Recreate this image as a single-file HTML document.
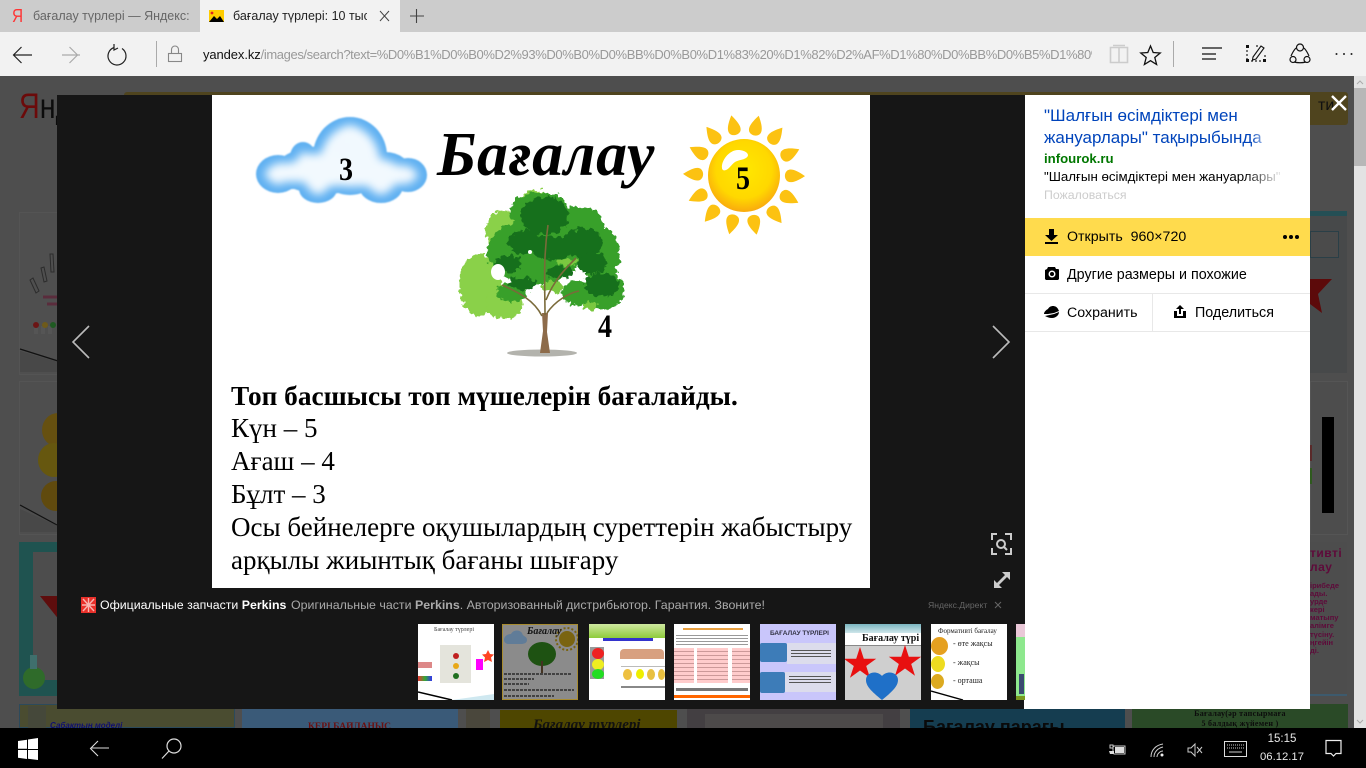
<!DOCTYPE html>
<html><head><meta charset="utf-8"><style>
html,body{margin:0;padding:0;width:1366px;height:768px;overflow:hidden;background:#4d4d4d;font-family:"Liberation Sans","Noto Sans CJK SC",sans-serif}
.a{position:absolute}
.t{position:absolute;white-space:nowrap}
svg{position:absolute;overflow:visible}
.s{font-family:"Liberation Serif",serif;color:#000;position:absolute;white-space:nowrap}
.d{font:bold 33px/38px "Liberation Serif",serif;transform:scaleX(.85);transform-origin:0 0}
.b{font:27px/33px "Liberation Serif",serif}
</style></head><body>
<!-- background page -->
<div class="a" style="left:0;top:76px;width:1354px;height:652px;background:#4e4e4e"></div>
<div class="t" style="left:19px;top:87px;font-size:35px;color:#6b0a0a;line-height:40px;transform:scaleX(.82);transform-origin:0 0">Я<span style="color:#0c0c0c">нд</span></div>
<div class="a" style="left:124px;top:92px;width:1224px;height:33px;background:#4f441e;border-radius:3px"></div>
<div class="t" style="left:1318px;top:97px;font-size:16px;color:#111">ти</div>
<div class="a" style="left:19px;top:212px;width:40px;height:161px;background:#4f4f4f;border:1px solid #545454"></div>
<div class="a" style="left:19px;top:381px;width:40px;height:152px;background:#4e4e4e;border:1px solid #545454"></div>
<svg style="left:0;top:0" width="60" height="720">
<path d="M30 280l6 13 3-2-6-13zM41 268l3 14 3-1-3-14zM50 254l1 18 3 0-1-18z" fill="none" stroke="#2c2c2c"/>
<path d="M43 297h14M47 304h10" stroke="#5a2c3c" stroke-width="3"/>
<path d="M20 349l38 12" stroke="#111" stroke-width="1.200"/><path d="M20 351v21h38v-10z" fill="#484848"/>
<path d="M34 326h4v8h-4zM41 326h4v8h-4zM48 326h4v8h-4z" fill="#555"/>
<circle cx="36" cy="325" r="3" fill="#6b1515"/><circle cx="45" cy="325" r="3" fill="#6e5a1a"/><circle cx="53" cy="325" r="3" fill="#1f5a22"/>
<ellipse cx="58" cy="430" rx="16" ry="17" fill="#665010"/><ellipse cx="54" cy="460" rx="16" ry="17" fill="#66570f"/><ellipse cx="56" cy="496" rx="15" ry="15" fill="#604a0e"/>
<path d="M20 505l37 20" stroke="#111" stroke-width="1.200"/><path d="M20 509v23h38v-6z" fill="#484848"/>
</svg>
<div class="a" style="left:19px;top:542px;width:40px;height:154px;background:#1f5350"></div>
<div class="a" style="left:33px;top:552px;width:26px;height:128px;background:#4d4d4d"></div>
<svg style="left:0;top:0" width="60" height="720">
<path d="M40 596h20v25z" fill="#5e0d0d"/>
<ellipse cx="34" cy="678" rx="11" ry="11" fill="#2f6b2a"/><path d="M30 655h7v14h-7z" fill="#3f6f6c"/>
</svg>
<!-- right tiles -->
<div class="a" style="left:1310px;top:211px;width:37px;height:162px;background:#47494a"></div>
<div class="a" style="left:1310px;top:211px;width:37px;height:5px;background:#244f55"></div>
<div class="a" style="left:1310px;top:231px;width:27px;height:25px;border:1px solid #2a3f47;background:#4b4b4b"></div>
<svg style="left:0;top:0" width="1366" height="400"><path d="M1310 279h22l-14 15 4 19-12-9z" fill="#5c0a0a"/></svg>
<div class="a" style="left:1310px;top:381px;width:36px;height:152px;background:#4d4d4d;border:1px solid #555"></div>
<div class="a" style="left:1322px;top:417px;width:12px;height:96px;background:#000"></div>
<div class="a" style="left:1310px;top:445px;width:2px;height:16px;background:#5a2a2a"></div>
<div class="a" style="left:1310px;top:468px;width:2px;height:16px;background:#2f5a1e"></div>
<div class="a" style="left:1310px;top:542px;width:37px;height:154px;background:#4d4d4d;border-bottom:2px solid #3d5a6d;box-sizing:border-box"></div>
<div class="t" style="left:1310px;top:546px;font:bold 12px/14px 'Liberation Sans',sans-serif;color:#5e0a3a;letter-spacing:.5px">тивті<br>лау</div>
<div class="t" style="left:1310px;top:582px;font:bold 7.500px/8.100px 'Liberation Sans',sans-serif;color:#5e0a3a">ірибеде<br>ады.<br>урде<br>кері<br>матыпу<br>алімге<br>түсіну.<br>ңгейін<br>ді.</div>
<!-- bottom row tiles -->
<div class="a" style="left:19px;top:704px;width:216px;height:24px;background:#4a4c30;box-sizing:border-box;border:1px solid #2c4a5c"></div>
<div class="a" style="left:28px;top:706px;width:18px;height:22px;background:#45483a"></div>
<div class="t" style="left:50px;top:721px;font:italic bold 8px 'Liberation Sans',sans-serif;color:#100f70">Сабақтың моделі</div>
<div class="a" style="left:242px;top:709px;width:216px;height:19px;background:#3a5a78"></div>
<div class="t" style="left:308px;top:722px;height:6px;overflow:hidden;font:bold 9.500px/11px 'Liberation Serif',serif;color:#6b1010">КЕРІ БАЙЛАНЫС</div>
<div class="a" style="left:466px;top:709px;width:24px;height:19px;background:#4a473c"></div>
<div class="a" style="left:500px;top:710px;width:177px;height:18px;background:#4e4600"></div>
<div class="t" style="left:533px;top:718px;height:10px;overflow:hidden;font:italic bold 15px/14px 'Liberation Serif',serif;color:#111">Бағалау түрлері</div>
<div class="a" style="left:687px;top:709px;width:213px;height:19px;background:#433f42"></div>
<div class="a" style="left:705px;top:714px;width:178px;height:14px;background:#4d4a4a"></div>
<div class="a" style="left:910px;top:709px;width:215px;height:19px;background:#153d50"></div>
<div class="t" style="left:923px;top:716px;height:12px;overflow:hidden;font:bold 18px/22px 'Liberation Sans',sans-serif;color:#0a0a0a">Бағалау парағы</div>
<div class="a" style="left:1132px;top:704px;width:216px;height:24px;background:#2a4a27"></div>
<div class="t" style="left:1132px;top:709px;width:216px;text-align:center;font:bold 8px/10px 'Liberation Serif',serif;color:#0c0c0c;letter-spacing:.3px">Бағалау(әр тапсырмаға<br>5 балдық жүйемен )</div>
<!-- scrollbar -->
<div class="a" style="left:1354px;top:76px;width:12px;height:652px;background:#e3e3e3"></div>
<div class="a" style="left:1354px;top:88px;width:12px;height:78px;background:#b7b7b7"></div>
<svg style="left:0;top:0" width="1366" height="768"><path d="M1357 84l3-3 3 3" fill="none" stroke="#aaa"/><path d="M1357 720l3 3 3-3" fill="none" stroke="#aaa"/></svg>

<!-- overlay -->
<div class="a" style="left:57px;top:95px;width:968px;height:614px;background:#161616"></div>
<div class="a" style="left:212px;top:95px;width:658px;height:493px;background:#fff"></div>

<svg style="left:0;top:0" width="1366" height="768">
<defs>
<radialGradient id="sun" cx=".5" cy=".42" r=".6"><stop offset="0" stop-color="#ffe800"/><stop offset=".65" stop-color="#ffd800"/><stop offset="1" stop-color="#f9a50f"/></radialGradient>
<filter id="ci" x="-15%" y="-15%" width="130%" height="130%"><feMorphology operator="erode" radius="7"/><feGaussianBlur stdDeviation="4.500"/></filter>
<filter id="cb" x="-5%" y="-5%" width="110%" height="110%"><feGaussianBlur stdDeviation=".8"/></filter>
<filter id="ro" x="-15%" y="-15%" width="130%" height="130%"><feTurbulence type="fractalNoise" baseFrequency=".2" numOctaves="2" seed="4" result="n"/><feDisplacementMap in="SourceGraphic" in2="n" scale="9" xChannelSelector="R" yChannelSelector="G"/></filter>
<g id="cloud">
<ellipse cx="350" cy="156" rx="37" ry="39"/><ellipse cx="303" cy="157" rx="13" ry="15"/><ellipse cx="278" cy="174" rx="22" ry="19"/><ellipse cx="318" cy="189" rx="19" ry="14"/><ellipse cx="381" cy="186" rx="22" ry="17"/><ellipse cx="408" cy="175" rx="19" ry="17"/><ellipse cx="325" cy="170" rx="50" ry="24"/><ellipse cx="385" cy="172" rx="26" ry="20"/><rect x="280" y="165" width="128" height="24"/>
</g>
<path id="ray" d="M0-61C6-52 7.500-47 5.500-43.500C3-40-3-40-5.500-43.500C-7.500-47-6-52 0-61z" fill="#fcc212"/>
<polygon id="st" points="0,-17 3.800,-5.300 16.200,-5.300 6.200,2 10,13.800 0,6.500 -10,13.800 -6.200,2 -16.200,-5.300 -3.800,-5.300" fill="#e81010"/>
</defs>
<!-- cloud -->
<use href="#cloud" fill="#5fb0f1" filter="url(#cb)"/>
<use href="#cloud" fill="#f2f9fe" filter="url(#ci)"/>
<!-- sun rays -->
<g transform="translate(744 175)">
<use href="#ray" transform="rotate(-12)"/><use href="#ray" transform="rotate(14)"/><use href="#ray" transform="rotate(39)"/><use href="#ray" transform="rotate(65)"/><use href="#ray" transform="rotate(91)"/><use href="#ray" transform="rotate(117)"/><use href="#ray" transform="rotate(142)"/><use href="#ray" transform="rotate(168)"/><use href="#ray" transform="rotate(194)"/><use href="#ray" transform="rotate(220)"/><use href="#ray" transform="rotate(245)"/><use href="#ray" transform="rotate(271)"/><use href="#ray" transform="rotate(297)"/><use href="#ray" transform="rotate(322)"/>
</g>
<ellipse cx="744" cy="175.500" rx="36" ry="36.500" fill="url(#sun)"/>
<path d="M722 168c-1-7 7-18 16-18 8 0 13 5 8 8-3 2-8 2-11 4-4 3-6 7-9 8-2 1-4 0-4-2z" fill="#fff"/>
<!-- tree -->
<ellipse cx="542" cy="353" rx="35" ry="3.500" fill="#b3b3ad"/>
<g filter="url(#ro)" fill="#8ad148">
<ellipse cx="505" cy="232" rx="20" ry="22"/><ellipse cx="480" cy="285" rx="21" ry="31"/><ellipse cx="505" cy="302" rx="19" ry="17"/><ellipse cx="535" cy="200" rx="14" ry="10"/>
</g>
<g filter="url(#ro)" fill="#38a02b">
<ellipse cx="540" cy="212" rx="30" ry="20"/><ellipse cx="578" cy="228" rx="27" ry="22"/><ellipse cx="535" cy="252" rx="48" ry="32"/><ellipse cx="600" cy="255" rx="20" ry="27"/><ellipse cx="605" cy="290" rx="19" ry="19"/><ellipse cx="580" cy="293" rx="18" ry="13"/><ellipse cx="512" cy="292" rx="15" ry="10"/>
</g>
<g filter="url(#ro)" fill="#176f1c">
<ellipse cx="545" cy="216" rx="24" ry="19"/><ellipse cx="525" cy="242" rx="17" ry="12"/><ellipse cx="583" cy="243" rx="20" ry="15"/><ellipse cx="602" cy="285" rx="17" ry="12"/><ellipse cx="592" cy="263" rx="15" ry="11"/><ellipse cx="508" cy="264" rx="14" ry="8"/><ellipse cx="552" cy="248" rx="22" ry="12"/><ellipse cx="522" cy="284" rx="14" ry="6"/><ellipse cx="560" cy="272" rx="14" ry="6"/>
</g>
<g filter="url(#ro)" fill="#7ac840"><ellipse cx="567" cy="262" rx="11" ry="3.500"/><ellipse cx="553" cy="287" rx="10" ry="7"/><ellipse cx="590" cy="306" rx="8" ry="4"/></g>
<g fill="#fff"><ellipse cx="498" cy="272" rx="7" ry="8"/><ellipse cx="549" cy="294" rx="6" ry="4"/><ellipse cx="530" cy="252" rx="2" ry="2"/></g>
<path d="M540 353l3-22-1-18h6l-1 19 3 21z" fill="#8d6b4a"/>
<path d="M542 316c-8-16-24-24-40-31M545 315c0-28-2-55 3-90M546 300c8-20 20-32 30-42M547 313c8-12 22-20 32-22" fill="none" stroke="#7a6a3a" stroke-width="1.600"/>
</svg>
<div class="s" style="left:437px;top:120px;font:italic bold 62px/70px 'Liberation Serif',serif;letter-spacing:.6px">Бағалау</div>
<div class="s d" style="left:339px;top:151px">3</div>
<div class="s d" style="left:736px;top:160px">5</div>
<div class="s d" style="left:598px;top:308px">4</div>

<div class="s" style="left:231px;top:380px;font:bold 27.300px/33px 'Liberation Serif',serif">Топ басшысы топ мүшелерін бағалайды.</div>
<div class="s b" style="left:231px;top:412px">Күн – 5</div>
<div class="s b" style="left:231px;top:445px">Ағаш – 4</div>
<div class="s b" style="left:231px;top:478px">Бұлт – 3</div>
<div class="s b" style="left:231px;top:511px">Осы бейнелерге оқушылардың суреттерін жабыстыру</div>
<div class="s b" style="left:231px;top:544px">арқылы жиынтық бағаны шығару</div>

<!-- arrows/icons -->
<svg style="left:0;top:0" width="1366" height="768">
<path d="M89 326L73 342l16 16" fill="none" stroke="#bbb" stroke-width="1.600"/>
<path d="M993 326l16 16-16 16" fill="none" stroke="#bbb" stroke-width="1.600"/>
<g fill="none" stroke="#ccc" stroke-width="2">
<path d="M992 540v-6h5M1005 534h6v6M1011 548v6h-6M997 554h-5v-6"/>
<circle cx="1001" cy="544" r="4"/><path d="M1004 547l3 3"/>
</g>
<g fill="#ccc">
<path d="M1002 572h8v8l-3-3-4 4-2-2 4-4zM994 588v-8l3 3 4-4 2 2-4 4 3 3z"/>
</g>
<path d="M1332 96l14 14M1346 96l-14 14" stroke="#fff" stroke-width="2.400"/>
<path d="M995 602l6 6M1001 602l-6 6" stroke="#666"/>
</svg>

<!-- ad -->
<div class="a" style="left:81px;top:597px;width:15px;height:16px;background:#e8302a"></div>
<svg style="left:81px;top:597px" width="15" height="16"><path d="M2 2l11 12M13 2L2 14M7.500 1v14M1 8h13" stroke="#f8b4b0" stroke-width="1.400"/></svg>
<div class="t" style="left:100px;top:597px;font-size:12.350px;line-height:16px;color:#fff">Официальные запчасти <b>Perkins</b></div>
<div class="t" style="left:291px;top:597px;font-size:12.400px;line-height:16px;color:#aaa">Оригинальные части <b>Perkins</b>. Авторизованный дистрибьютор. Гарантия. Звоните!</div>
<div class="t" style="left:928px;top:599px;font-size:8.600px;line-height:12px;color:#666">Яндекс.Директ</div>

<!-- thumbs -->
<div class="a" style="left:418px;top:624px;width:76px;height:76px;background:#fff;overflow:hidden">
<div class="t" style="left:16px;top:3px;font:6px 'Liberation Serif',serif;color:#444">Бағалау түрлері</div>
<div class="a" style="left:22px;top:21px;width:31px;height:38px;background:#e4e4dc"></div>
<div class="a" style="left:35px;top:29px;width:6px;height:6px;border-radius:50%;background:#c02020"></div>
<div class="a" style="left:35px;top:39px;width:6px;height:6px;border-radius:50%;background:#e8a818"></div>
<div class="a" style="left:35px;top:49px;width:6px;height:6px;border-radius:50%;background:#207020"></div>
<div class="a" style="left:58px;top:35px;width:7px;height:11px;background:#f0f"></div>
<svg style="left:64px;top:26px" width="12" height="12"><path d="M6 0l2 4 4 .5-3 3 1 4.500-4-2-4 2 1-4.500-3-3 4-.5z" fill="#f42"/></svg>
<div class="a" style="left:0;top:38px;width:14px;height:6px;background:#d88"></div>
<div class="a" style="left:0;top:52px;width:14px;height:5px;background:linear-gradient(90deg,#e33,#3a3,#33e)"></div>
<svg style="left:0;top:60px" width="76" height="16"><path d="M0 8l34 8" stroke="#000" stroke-width="1.500"/><path d="M34 16l42-6v6z" fill="#cfe8f0"/></svg>
</div>
<div class="a" style="left:502px;top:624px;width:76px;height:76px;background:#8b8b8b;box-shadow:inset 0 0 0 1px #a88c30;overflow:hidden">
<svg style="left:0;top:0" width="76" height="76">
<path d="M2 16c0-4 4-6 7-6 2-4 8-5 11-1 1 4 5 3 5 7 0 3-3 4-6 4H6c-2 0-4-2-4-4z" fill="#607c98"/>
<circle cx="65" cy="15" r="8" fill="#7a6410"/><circle cx="65" cy="15" r="11" fill="none" stroke="#7a6410" stroke-width="2" stroke-dasharray="2 2"/>
<ellipse cx="40" cy="30" rx="14" ry="12" fill="#1e5212"/><path d="M39 37h2v12h-2z" fill="#432"/>
<path d="M2 50h68M2 55h30M2 60h25M2 66h70M2 72h50" stroke="#2a2a2a" stroke-width="1.500" stroke-dasharray="3 1"/>
</svg>
<div class="t" style="left:25px;top:2px;font:italic bold 10px 'Liberation Serif',serif;color:#111">Бағалау</div>
</div>
<div class="a" style="left:589px;top:624px;width:76px;height:76px;background:#fff;overflow:hidden">
<div class="a" style="left:0;top:0;width:76px;height:14px;background:linear-gradient(#cfe8a0,#8ecb3a)"></div>
<div class="a" style="left:14px;top:14px;width:50px;height:3px;background:#33c"></div>
<div class="a" style="left:1px;top:23px;width:14px;height:32px;background:#999"></div>
<div class="a" style="left:3px;top:24px;width:12px;height:11px;border-radius:50%;background:#e22"></div>
<div class="a" style="left:3px;top:35px;width:12px;height:11px;border-radius:50%;background:#ee2"></div>
<div class="a" style="left:3px;top:45px;width:12px;height:10px;border-radius:50%;background:#2d2"></div>
<div class="a" style="left:31px;top:25px;width:44px;height:10px;background:#d8a080;border-radius:4px 4px 0 0"></div>
<div class="a" style="left:32px;top:42px;width:44px;height:19px;border-top:1px solid #bbb;border-bottom:2px solid #888"></div>
<div class="a" style="left:34px;top:45px;width:9px;height:11px;border-radius:50%;background:#eec040"></div>
<div class="a" style="left:47px;top:45px;width:8px;height:10px;border-radius:50%;background:#ee0"></div>
<div class="a" style="left:58px;top:45px;width:8px;height:11px;border-radius:50%;background:#e8c040"></div>
<div class="a" style="left:69px;top:45px;width:7px;height:11px;border-radius:50%;background:#e8c040"></div>
</div>
<div class="a" style="left:674px;top:624px;width:76px;height:76px;background:#fff;overflow:hidden">
<div class="a" style="left:9px;top:4px;width:60px;height:2px;background:#e8a040"></div>
<div class="a" style="left:2px;top:9px;width:72px;height:13px;background:repeating-linear-gradient(#fff 0 2px,#999 2px 3px)"></div>
<div class="a" style="left:0;top:24px;width:20px;height:35px;background:repeating-linear-gradient(#fcc 0 3px,#c99 3px 4px)"></div>
<div class="a" style="left:23px;top:24px;width:31px;height:35px;background:repeating-linear-gradient(#fcc 0 3px,#c99 3px 4px)"></div>
<div class="a" style="left:58px;top:24px;width:18px;height:35px;background:repeating-linear-gradient(#fcc 0 3px,#c99 3px 4px)"></div>
<div class="a" style="left:2px;top:64px;width:72px;height:3px;background:#777"></div>
<div class="a" style="left:0;top:71px;width:76px;height:3px;background:#f60"></div>
</div>
<div class="a" style="left:760px;top:624px;width:76px;height:76px;background:#c9c6fb;overflow:hidden">
<div class="t" style="left:10px;top:6px;font:bold 6.500px 'Liberation Sans',sans-serif;color:#334">БАҒАЛАУ ТҮРЛЕРІ</div>
<div class="a" style="left:27px;top:19px;width:49px;height:21px;background:#dcdcec"></div>
<div class="a" style="left:25px;top:48px;width:51px;height:20px;background:#dcdcec"></div>
<div class="a" style="left:0;top:19px;width:27px;height:19px;background:#3d7cb8;border-radius:2px"></div>
<div class="a" style="left:0;top:48px;width:25px;height:21px;background:#3d7cb8;border-radius:2px"></div>
<div class="a" style="left:31px;top:26px;width:40px;height:7px;background:repeating-linear-gradient(#555 0 1px,#dcdcec 1px 3px)"></div>
<div class="a" style="left:29px;top:52px;width:42px;height:9px;background:repeating-linear-gradient(#555 0 1px,#dcdcec 1px 3px)"></div>
</div>
<div class="a" style="left:845px;top:624px;width:76px;height:76px;background:#cfcfcf;overflow:hidden">
<div class="a" style="left:0;top:0;width:76px;height:9px;background:linear-gradient(#7ab5c0,#cfe6ea)"></div>
<div class="a" style="left:0;top:9px;width:76px;height:12px;background:#fff;border-bottom:1px solid #888"></div>
<div class="t" style="left:17px;top:9px;font:bold 10px 'Liberation Serif',serif;color:#111">Бағалау түрі</div>
<svg style="left:0;top:0" width="76" height="76">
<use href="#st" transform="translate(15 40)"/>
<use href="#st" transform="translate(60 38)"/>
<path d="M37 76c-11-9-16-14-16-20 0-8 11-10 16-4 5-6 16-4 16 4 0 6-5 11-16 20z" fill="#1f70c8"/>
</svg>
</div>
<div class="a" style="left:931px;top:624px;width:76px;height:76px;background:#fff;overflow:hidden">
<div class="t" style="left:7px;top:3px;font:7px 'Liberation Serif',serif;color:#222">Формативті бағалау</div>
<div class="a" style="left:0;top:13px;width:17px;height:18px;border-radius:50%;background:#e5a020"></div>
<div class="a" style="left:0;top:32px;width:14px;height:16px;border-radius:50%;background:#eedc20"></div>
<div class="a" style="left:0;top:50px;width:13px;height:15px;border-radius:50%;background:#dcaa20"></div>
<div class="t" style="left:22px;top:15px;font:8px 'Liberation Serif',serif;color:#222">- өте жақсы</div>
<div class="t" style="left:22px;top:34px;font:8px 'Liberation Serif',serif;color:#222">- жақсы</div>
<div class="t" style="left:22px;top:52px;font:8px 'Liberation Serif',serif;color:#222">- орташа</div>
<svg style="left:0;top:66px" width="76" height="10"><path d="M0 1l32 9" stroke="#000" stroke-width="1.400"/></svg>
</div>
<div class="a" style="left:1016px;top:624px;width:9px;height:76px;background:linear-gradient(#eac8d8 0 13px,#8ee88e 13px 72px,#7a9a20 72px)"></div>
<div class="a" style="left:1019px;top:674px;width:5px;height:20px;background:#3a4a70"></div>

<!-- right panel -->
<div class="a" style="left:1025px;top:95px;width:285px;height:614px;background:#fff"></div>
<div class="a" style="left:1024px;top:700px;width:1px;height:9px;background:#fff"></div>
<div class="t" style="left:1044px;top:105px;width:225px;overflow:hidden;font-size:17px;line-height:22px;color:#04b">"Шалғын өсімдіктері мен<br>жануарлары" тақырыбында</div>
<div class="a" style="left:1250px;top:127px;width:16px;height:22px;background:linear-gradient(90deg,rgba(255,255,255,0),rgba(255,255,255,.7))"></div>
<div class="t" style="left:1044px;top:151px;font-size:13.200px;line-height:16px;font-weight:bold;color:#070">infourok.ru</div>
<div class="t" style="left:1044px;top:169px;width:240px;overflow:hidden;font-size:13.300px;line-height:16px;color:#000">"Шалғын өсімдіктері мен жануарлары"</div>
<div class="a" style="left:1244px;top:168px;width:40px;height:17px;background:linear-gradient(90deg,rgba(255,255,255,0),#fff)"></div>
<div class="t" style="left:1044px;top:187px;font-size:12.300px;line-height:16px;color:#ccc">Пожаловаться</div>
<div class="a" style="left:1025px;top:218px;width:285px;height:38px;background:#ffdb4d"></div>
<div class="t" style="left:1067px;top:229px;font-size:14.200px;line-height:17px;color:#000">Открыть&nbsp; 960×720</div>
<div class="t" style="left:1067px;top:267px;font-size:14.300px;line-height:17px;color:#000">Другие размеры и похожие</div>
<div class="t" style="left:1067px;top:305px;font-size:14.200px;line-height:17px;color:#000">Сохранить</div>
<div class="t" style="left:1195px;top:305px;font-size:14.300px;line-height:17px;color:#000">Поделиться</div>
<div class="a" style="left:1025px;top:293px;width:285px;height:1px;background:#e8e8e8"></div>
<div class="a" style="left:1025px;top:331px;width:285px;height:1px;background:#e8e8e8"></div>
<div class="a" style="left:1152px;top:294px;width:1px;height:37px;background:#e8e8e8"></div>
<svg style="left:0;top:0" width="1366" height="768">
<path d="M1049 229h5v6h4l-6.500 6-6.500-6h4zM1045 242h13v2h-13z" fill="#000"/>
<g fill="#000"><circle cx="1285" cy="237" r="2"/><circle cx="1291" cy="237" r="2"/><circle cx="1297" cy="237" r="2"/></g>
<path d="M1045 270l2-1 1-2h7l1 2h2c.600 0 1 .400 1 1v9l-1 1h-12l-1-1z" fill="#000"/><circle cx="1052" cy="274" r="3.500" fill="#fff"/><circle cx="1052" cy="274" r="2" fill="#000"/>
<path d="M1048 309c1-2 3-3 5-3 2 0 4 1 5 3l1 2-5 2-6 1-4 0c0-2 2-4 4-5zM1045 316l9-2 5-2c0 3-3 6-7 6-3 0-5-1-7-2z" fill="#000"/>
<path d="M1180 305l4 4h-3v5h-2v-5h-3zM1174 311h3v5h6v-5h3v7h-12z" fill="#000"/>
</svg>

<!-- taskbar -->
<div class="a" style="left:0;top:728px;width:1366px;height:40px;background:#000"></div>
<svg style="left:0;top:0" width="1366" height="768">
<path d="M18 741l9-1.300v9h-9zM28 739.500l10-1.500v11H28zM18 750h9v9l-9-1.300zM28 750h10v10l-10-1.300z" fill="#fff"/>
<path d="M109 748H91M98 741l-7.500 7.500 7.500 7.500" fill="none" stroke="#ddd" stroke-width="1.100"/>
<circle cx="174" cy="746" r="7" fill="none" stroke="#ddd" stroke-width="1.200"/><path d="M169 751l-7 7.500" stroke="#ddd" stroke-width="1.200"/>
<!-- tray -->
<path d="M1110 745h3v3h-3zM1114 746h11v8h-11l-1-1v-6z" fill="none" stroke="#ccc"/><rect x="1115" y="747" width="9" height="6" fill="#ddd"/><path d="M1109 751h5v3h-4z" fill="#ddd"/>
<g fill="none" stroke="#ccc"><path d="M1151 757c0-7 5-12 12-13"/><path d="M1154 757c0-5 4-9 9-10"/><path d="M1157 757c0-3 3-6 6-6"/></g><circle cx="1162" cy="755" r="1.500" fill="#eee"/>
<path d="M1188 748h3l4-4v12l-4-4h-3z" fill="none" stroke="#ccc"/><path d="M1197 747l5 6M1202 747l-5 6" stroke="#ccc"/>
<rect x="1224.500" y="741.500" width="22" height="15" fill="none" stroke="#ddd"/><path d="M1227 745h17M1227 748h17" stroke="#ccc" stroke-dasharray="1 1"/><path d="M1229 752h13" stroke="#ccc"/>
<path d="M1326 740.500h15v13h-5l-2.500 2.500-2.500-2.500h-5z" fill="none" stroke="#eee" stroke-width="1.200"/>
</svg>
<div class="t" style="left:1250px;top:731px;width:64px;text-align:center;font-size:11.500px;line-height:17px;color:#e8e8e8">15:15</div>
<div class="t" style="left:1250px;top:749px;width:64px;text-align:center;font-size:11.300px;line-height:17px;color:#e8e8e8">06.12.17</div>

<!-- browser chrome -->
<div class="a" style="left:0;top:0;width:1366px;height:32px;background:#ccc"></div>
<div class="a" style="left:200px;top:0;width:200px;height:32px;background:#f2f2f2"></div>
<div class="a" style="left:0;top:32px;width:1366px;height:44px;background:#f2f2f2"></div>
<div class="t" style="left:12px;top:5px;font-size:18px;line-height:22px;color:#f33;transform:scaleX(.85);transform-origin:0 0">Я</div>
<div class="t" style="left:33px;top:8px;width:158px;overflow:hidden;font-size:12.500px;line-height:16px;color:#666">бағалау түрлері — Яндекс:</div>
<div class="t" style="left:233px;top:8px;width:134px;overflow:hidden;font-size:12.500px;line-height:16px;color:#222">бағалау түрлері: 10 тыс</div>
<svg style="left:0;top:0" width="1366" height="76">
<rect x="209" y="10" width="15" height="12" fill="#ffcc00"/><path d="M209 22l5-6 3 3 3-3 4 6z" fill="#000"/><circle cx="212" cy="13" r="1.400" fill="#e02020"/>
<path d="M380 11l9 10M389 11l-9 10" stroke="#444" stroke-width="1"/>
<path d="M416.500 9v14M410 16h14" stroke="#444" stroke-width="1.100"/>
<path d="M32 55H14M21.500 47l-8 8 8 8" fill="none" stroke="#222" stroke-width="1.200"/>
<path d="M80 55H62M69.500 47l8 8-8 8M62 55" fill="none" stroke="#aaa" stroke-width="1.200"/>
<path d="M114 47.500a9 9 0 1 0 8 1M114 44v6l4-2" fill="none" stroke="#222" stroke-width="1.200"/>
<path d="M156.500 41v26" stroke="#aaa"/>
<rect x="168.500" y="53.500" width="13" height="8" fill="none" stroke="#888" stroke-width="1.100"/><path d="M171.500 53.500v-4a3.500 3.500 0 0 1 7 0v4" fill="none" stroke="#888" stroke-width="1.100"/>
<!-- reading view -->
<path d="M1110.500 47.500h8.500v15h-8.500zM1119 47.500h8.500v15H1119zM1113 45.500h12" fill="none" stroke="#ccc" stroke-width="1.600"/>
<path d="M1150.500 46l2.700 6.500 7 .5-5.400 4.500 1.800 7-6.100-3.800-6.100 3.800 1.800-7-5.400-4.500 7-.5z" fill="none" stroke="#111" stroke-width="1.300"/>
<path d="M1173.500 41v26" stroke="#aaa"/>
<path d="M1202 48h20M1202 54h14M1202 59h14" stroke="#111" stroke-width="1.300"/>
<path d="M1247 46h4M1256 46h3M1247 61h18M1247 46v16M1265 55v7" fill="none" stroke="#222" stroke-dasharray="2 2" stroke-width="1.200"/>
<rect x="1246" y="45" width="3" height="3" fill="#111"/><rect x="1246" y="59" width="3" height="3" fill="#111"/><rect x="1263" y="59" width="3" height="3" fill="#111"/>
<path d="M1253 57l8-11 3 2-8 11-3.500 1z" fill="none" stroke="#111" stroke-width="1.100"/>
<g fill="none" stroke="#111" stroke-width="1.200"><path d="M1296 48c-3 3-4 6-5 8M1304 48c3 3 4 6 5 8M1294 62c4 1 8 1 12 0"/><circle cx="1300" cy="47.500" r="3.500"/><circle cx="1293" cy="59.500" r="3"/><circle cx="1307" cy="59.500" r="3"/></g>
<g fill="#222"><circle cx="1336.500" cy="54" r="1"/><circle cx="1344" cy="54" r="1"/><circle cx="1351.500" cy="54" r="1"/></g>
</svg>
<div class="t" style="left:203px;top:47px;width:889px;overflow:hidden;font-size:13px;line-height:16px;color:#999;letter-spacing:-.39px"><span style="color:#111;letter-spacing:-.1px">yandex.kz</span>/images/search?text=%D0%B1%D0%B0%D2%93%D0%B0%D0%BB%D0%B0%D1%83%20%D1%82%D2%AF%D1%80%D0%BB%D0%B5%D1%80%</div>
</body></html>
